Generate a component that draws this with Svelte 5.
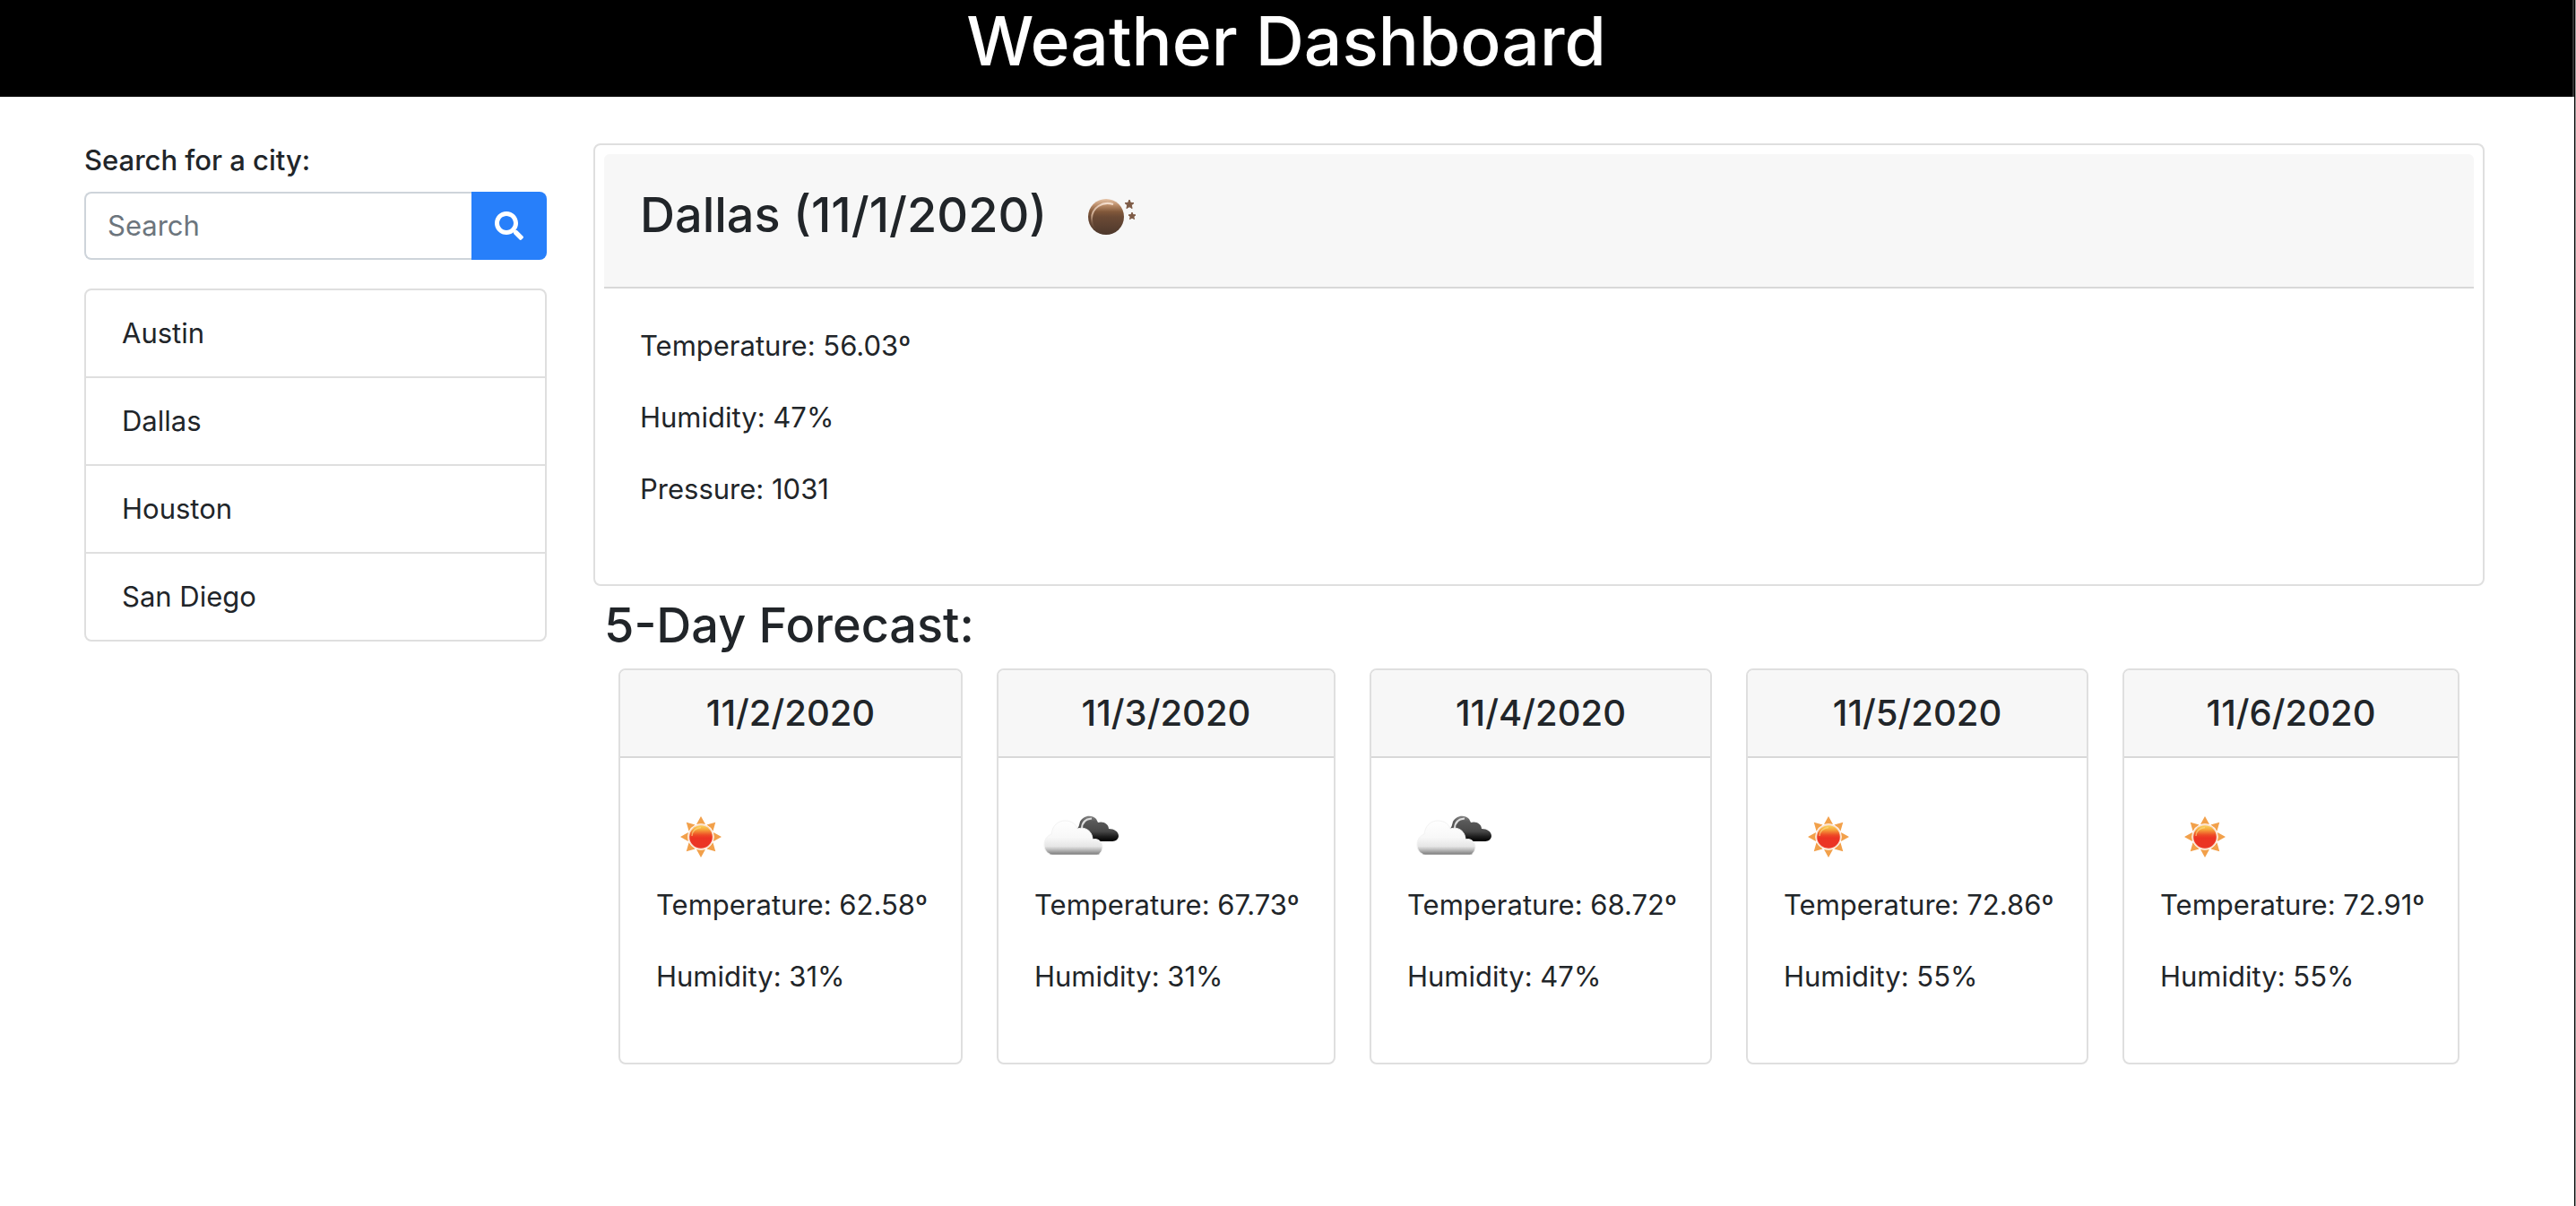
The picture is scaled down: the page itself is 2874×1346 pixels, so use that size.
<script>
  let query = $state('');

  const cities = ['Austin', 'Dallas', 'Houston', 'San Diego'];

  const current = {
    title: 'Dallas (11/1/2020)',
    readings: ['Temperature: 56.03º', 'Humidity: 47%', 'Pressure: 1031']
  };

  const forecast = [
    { date: '11/2/2020', icon: 'sun', temperature: '62.58', humidity: 31 },
    { date: '11/3/2020', icon: 'clouds', temperature: '67.73', humidity: 31 },
    { date: '11/4/2020', icon: 'clouds', temperature: '68.72', humidity: 47 },
    { date: '11/5/2020', icon: 'sun', temperature: '72.86', humidity: 55 },
    { date: '11/6/2020', icon: 'sun', temperature: '72.91', humidity: 55 }
  ];

  const rays = [0, 45, 90, 135, 180, 225, 270, 315];
</script>

{#snippet moon()}
  <svg class="weather" viewBox="0 0 100 100" role="img" aria-label="Clear night">
    <defs>
      <linearGradient id="moon-body" x1="0" y1="0" x2="0" y2="1">
        <stop offset="0" stop-color="#e6c3a6" />
        <stop offset="0.18" stop-color="#b98b68" />
        <stop offset="0.36" stop-color="#81583a" />
        <stop offset="0.5" stop-color="#6b4a35" />
        <stop offset="1" stop-color="#4d382c" />
      </linearGradient>
      <linearGradient id="moon-rim" x1="0.6" y1="0" x2="0.1" y2="1">
        <stop offset="0" stop-color="#f3dccb" />
        <stop offset="0.6" stop-color="#c8a68c" />
        <stop offset="1" stop-color="#7a5b45" stop-opacity="0" />
      </linearGradient>
    </defs>
    <circle cx="50" cy="46" r="20" fill="url(#moon-body)" />
    <path d="M58 32C46 28 34 36 34 48c0 5 1 9 4 12" fill="none" stroke="url(#moon-rim)" stroke-width="2" />
    <path d="M76 27l1.400 3.300 3.600.3-2.700 2.400.8 3.600-3.100-1.900-3.100 1.900.8-3.600-2.700-2.400 3.600-.3z" fill="#7d5a45" stroke="#7d5a45" />
    <path d="M79 41l1.100 2.600 2.900.3-2.200 1.900.7 2.800-2.500-1.500-2.500 1.500.7-2.800-2.200-1.900 2.900-.3z" fill="#7d5a45" stroke="#7d5a45" />
  </svg>
{/snippet}

{#snippet sun()}
  <svg class="weather" viewBox="0 0 100 100" role="img" aria-label="Clear sky">
    <defs>
      <linearGradient id="sun-body" x1="0" y1="0" x2="0" y2="1">
        <stop offset="0" stop-color="#f9d45f" />
        <stop offset="0.18" stop-color="#f6a83c" />
        <stop offset="0.42" stop-color="#ee4a26" />
        <stop offset="0.55" stop-color="#ec3323" />
        <stop offset="1" stop-color="#ea3526" />
      </linearGradient>
    </defs>
    {#each rays as angle}
      <path d="M50 25L55 34Q50 32.500 45 34z" fill="#f2a04a" transform="rotate({angle} 50 48)" />
    {/each}
    <circle cx="50" cy="48" r="14" fill="#fbdcc8" />
    <circle cx="50" cy="48" r="12.800" fill="url(#sun-body)" />
    <path d="M40 47c0-5 4-9 10-9.500" fill="none" stroke="#fbe08a" stroke-width="1.500" stroke-opacity="0.6" />
  </svg>
{/snippet}

{#snippet clouds()}
  <svg class="weather" viewBox="0 0 100 100" role="img" aria-label="Broken clouds">
    <defs>
      <linearGradient id="cloud-dark" gradientUnits="userSpaceOnUse" x1="0" y1="25" x2="0" y2="53">
        <stop offset="0" stop-color="#858585" />
        <stop offset="0.2" stop-color="#5a5a5a" />
        <stop offset="0.6" stop-color="#484848" />
        <stop offset="0.82" stop-color="#1c1c1c" />
        <stop offset="1" stop-color="#000" />
      </linearGradient>
      <linearGradient id="cloud-light" gradientUnits="userSpaceOnUse" x1="0" y1="29" x2="0" y2="68">
        <stop offset="0" stop-color="#fff" />
        <stop offset="0.5" stop-color="#f8f8f8" />
        <stop offset="0.76" stop-color="#e6e6e6" />
        <stop offset="0.9" stop-color="#a8a8a8" />
        <stop offset="1" stop-color="#777" />
      </linearGradient>
    </defs>
    <path
      d="M47 39C50 38 50 34 51 31C54 25 63 22 69 28L71 32C77 30 83 34 83 39C89 39 94 42 94 47C94 50 91 53 87 53H66C64 44 58 40 47 39z"
      fill="url(#cloud-dark)"
    />
    <path d="M53 39C53 32 57 28 64 27.500" fill="none" stroke="#dcdcdc" stroke-width="2" />
    <path
      d="M20 68C14 67 11 62 11 57C11 51 14 47 19 45C20 36 26 30 34 30C41 30 46 33 48 39C57 36 65 42 65 51C71 49 76 54 76 59C76 63 74 67 70 68z"
      fill="url(#cloud-light)"
      stroke="#f3f3f3"
      stroke-width="1"
    />
    <path d="M18 67H72" stroke="#8a8a8a" stroke-width="1" stroke-linecap="round" />
  </svg>
{/snippet}

<div class="window">
  <div class="page">
    <header class="banner"><h1>Weather Dashboard</h1></header>

    <div class="layout">
      <aside>
        <form onsubmit={(event) => event.preventDefault()}>
          <label for="city">Search for a city:</label>
          <div class="search">
            <input id="city" type="text" placeholder="Search" bind:value={query} />
            <button type="submit" aria-label="Search">
              <svg viewBox="0 0 512 512" aria-hidden="true">
                <path
                  fill="currentColor"
                  d="M505 442.700L405.300 343c-4.500-4.500-10.600-7-17-7H372c27.600-35.300 44-79.700 44-128C416 93.100 322.900 0 208 0S0 93.100 0 208s93.100 208 208 208c48.300 0 92.700-16.400 128-44v16.300c0 6.400 2.500 12.500 7 17l99.700 99.700c9.400 9.400 24.600 9.400 33.900 0l28.300-28.300c9.400-9.400 9.400-24.600.1-34zM208 336c-70.700 0-128-57.200-128-128 0-70.700 57.200-128 128-128 70.700 0 128 57.200 128 128 0 70.700-57.200 128-128 128z"
                />
              </svg>
            </button>
          </div>
        </form>
        <ul class="cities">
          {#each cities as city}
            <li>{city}</li>
          {/each}
        </ul>
      </aside>

      <main>
        <section class="card current">
          <div class="current-header">
            <h2>{current.title}</h2>
            {@render moon()}
          </div>
          <div class="card-body">
            {#each current.readings as reading}
              <p>{reading}</p>
            {/each}
          </div>
        </section>

        <section class="forecast">
          <h2>5-Day Forecast:</h2>
          <div class="days">
            {#each forecast as day}
              <article class="card">
                <h3>{day.date}</h3>
                <div class="card-body">
                  {#if day.icon === 'sun'}
                    {@render sun()}
                  {:else}
                    {@render clouds()}
                  {/if}
                  <p>Temperature: {day.temperature}º</p>
                  <p>Humidity: {day.humidity}%</p>
                </div>
              </article>
            {/each}
          </div>
        </section>
      </main>
    </div>
  </div>
</div>

<style>
  :global(body) {
    margin: 0;
    background: #fff;
  }

  .window {
    border-right: 1px solid #999;
    font-family: Inter, 'Liberation Sans', sans-serif;
    font-size: 31px;
    line-height: 48px;
    color: #212529;
  }

  .window,
  .window * {
    box-sizing: border-box;
  }

  .page {
    min-height: 100vh;
    border-right: 1px solid #000;
  }

  h1,
  h2,
  h3,
  p,
  ul {
    margin: 0;
  }

  h1,
  h2,
  h3 {
    font-weight: 500;
  }

  .banner {
    padding-bottom: 16px;
    border-right: 2px solid #333;
    background: #000;
    color: #fff;
    text-align: center;
  }

  h1 {
    font-size: 75px;
    line-height: 92px;
  }

  .layout {
    display: grid;
    grid-template-columns: minmax(0, 516fr) minmax(0, 2110fr);
    gap: 52px;
    align-items: start;
    padding: 52px 100px 52px 94px;
  }

  label {
    display: block;
    margin-bottom: 16px;
    font-weight: 500;
    line-height: 38px;
  }

  .search {
    display: flex;
    height: 76px;
    margin-bottom: 32px;
  }

  input {
    flex: 1;
    min-width: 0;
    padding: 0 24px;
    border: 2px solid #ced4da;
    border-right: 0;
    border-radius: 8px 0 0 8px;
    background: #fff;
    color: inherit;
    font: inherit;
  }

  input::placeholder {
    color: #6c757d;
    opacity: 1;
  }

  button {
    display: grid;
    place-items: center;
    width: 84px;
    padding: 0;
    border: 0;
    border-radius: 0 8px 8px 0;
    background: #277ffa;
    color: #fff;
  }

  button svg {
    width: 32px;
    height: 32px;
  }

  .cities {
    padding: 0;
    border: 2px solid #dfdfdf;
    border-radius: 8px;
    list-style: none;
  }

  .cities li {
    padding: 24px 40px;
  }

  .cities li + li {
    border-top: 2px solid #dfdfdf;
  }

  .card {
    overflow: hidden;
    border: 2px solid #dfdfdf;
    border-radius: 8px;
    background: #fff;
  }

  .current {
    padding: 10px;
  }

  .current-header {
    display: flex;
    align-items: center;
    gap: 16px;
    padding: 24px 40px;
    border-bottom: 2px solid #d8d8d8;
    border-radius: 6px 6px 0 0;
    background: #f7f7f7;
  }

  h2 {
    font-size: 54px;
    line-height: 68px;
  }

  .current-header h2 {
    padding-bottom: 12px;
  }

  .weather {
    display: block;
    width: 100px;
    height: 100px;
  }

  .card-body {
    padding: 40px;
  }

  .card-body p {
    margin-bottom: 32px;
    white-space: nowrap;
  }

  .forecast {
    padding: 10px 28px 0 12px;
  }

  .days {
    display: grid;
    grid-template-columns: 384fr 378fr 382fr 382fr 376fr;
    gap: 38px;
    padding: 14px 0 0 16px;
  }

  h3 {
    padding: 24px;
    border-bottom: 2px solid #d8d8d8;
    background: #f7f7f7;
    font-size: 40px;
    line-height: 48px;
    text-align: center;
  }
</style>
